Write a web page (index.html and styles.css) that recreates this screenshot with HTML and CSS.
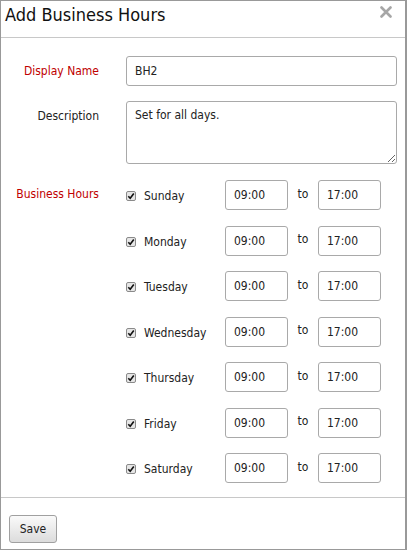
FILE: index.html
```html
<!DOCTYPE html>
<html>
<head>
    <title>Add Business Hours</title>
    <link rel="stylesheet" href="styles.css">
</head>
<body>

<div class="dialog">
    <div class="dialog-head">
        <h2>Add Business Hours</h2>
        <span class="close"><svg width="12" height="12" viewBox="0 0 12 12"><path d="M1.5 1.5 L10.5 10.5 M10.5 1.5 L1.5 10.5" stroke="#a6a6a6" stroke-width="2.6" stroke-linecap="round"/></svg></span>
    </div>

    <form class="form">
        <label class="lbl req" for="display_name">Display Name</label>
        <input type="text" id="display_name" value="BH2">

        <label class="lbl" for="description">Description</label>
        <textarea id="description">Set for all days.</textarea>

        <label class="lbl req">Business Hours</label>
        <div class="days">
            <div class="day">
                <span class="chk"><svg width="10" height="10" viewBox="0 0 10 10"><rect x="0.5" y="0.5" width="9" height="9" rx="1.5" fill="#e6e6e6" stroke="#8a8a8a"/><path d="M2.3 5.2 L4.2 7.2 L7.8 2.4" fill="none" stroke="#111" stroke-width="1.6"/></svg></span>
                <span class="day-name">Sunday</span>
                <input type="text" class="time" value="09:00">
                <span class="to">to</span>
                <input type="text" class="time" value="17:00">
            </div>
            <div class="day">
                <span class="chk"><svg width="10" height="10" viewBox="0 0 10 10"><rect x="0.5" y="0.5" width="9" height="9" rx="1.5" fill="#e6e6e6" stroke="#8a8a8a"/><path d="M2.3 5.2 L4.2 7.2 L7.8 2.4" fill="none" stroke="#111" stroke-width="1.6"/></svg></span>
                <span class="day-name">Monday</span>
                <input type="text" class="time" value="09:00">
                <span class="to">to</span>
                <input type="text" class="time" value="17:00">
            </div>
            <div class="day">
                <span class="chk"><svg width="10" height="10" viewBox="0 0 10 10"><rect x="0.5" y="0.5" width="9" height="9" rx="1.5" fill="#e6e6e6" stroke="#8a8a8a"/><path d="M2.3 5.2 L4.2 7.2 L7.8 2.4" fill="none" stroke="#111" stroke-width="1.6"/></svg></span>
                <span class="day-name">Tuesday</span>
                <input type="text" class="time" value="09:00">
                <span class="to">to</span>
                <input type="text" class="time" value="17:00">
            </div>
            <div class="day">
                <span class="chk"><svg width="10" height="10" viewBox="0 0 10 10"><rect x="0.5" y="0.5" width="9" height="9" rx="1.5" fill="#e6e6e6" stroke="#8a8a8a"/><path d="M2.3 5.2 L4.2 7.2 L7.8 2.4" fill="none" stroke="#111" stroke-width="1.6"/></svg></span>
                <span class="day-name">Wednesday</span>
                <input type="text" class="time" value="09:00">
                <span class="to">to</span>
                <input type="text" class="time" value="17:00">
            </div>
            <div class="day">
                <span class="chk"><svg width="10" height="10" viewBox="0 0 10 10"><rect x="0.5" y="0.5" width="9" height="9" rx="1.5" fill="#e6e6e6" stroke="#8a8a8a"/><path d="M2.3 5.2 L4.2 7.2 L7.8 2.4" fill="none" stroke="#111" stroke-width="1.6"/></svg></span>
                <span class="day-name">Thursday</span>
                <input type="text" class="time" value="09:00">
                <span class="to">to</span>
                <input type="text" class="time" value="17:00">
            </div>
            <div class="day">
                <span class="chk"><svg width="10" height="10" viewBox="0 0 10 10"><rect x="0.5" y="0.5" width="9" height="9" rx="1.5" fill="#e6e6e6" stroke="#8a8a8a"/><path d="M2.3 5.2 L4.2 7.2 L7.8 2.4" fill="none" stroke="#111" stroke-width="1.6"/></svg></span>
                <span class="day-name">Friday</span>
                <input type="text" class="time" value="09:00">
                <span class="to">to</span>
                <input type="text" class="time" value="17:00">
            </div>
            <div class="day">
                <span class="chk"><svg width="10" height="10" viewBox="0 0 10 10"><rect x="0.5" y="0.5" width="9" height="9" rx="1.5" fill="#e6e6e6" stroke="#8a8a8a"/><path d="M2.3 5.2 L4.2 7.2 L7.8 2.4" fill="none" stroke="#111" stroke-width="1.6"/></svg></span>
                <span class="day-name">Saturday</span>
                <input type="text" class="time" value="09:00">
                <span class="to">to</span>
                <input type="text" class="time" value="17:00">
            </div>
        </div>
    </form>

    <div class="dialog-foot">
        <button type="button" class="btn">Save</button>
    </div>
</div>

</body>
</html>
```

FILE: styles.css
```css
body {
    margin: 0;
    font-family: "DejaVu Sans Condensed", "DejaVu Sans", sans-serif;
    font-stretch: condensed;
    font-size: 12px;
    color: #222;
    background-color: #fff;
}
.dialog {
    box-sizing: border-box;
    width: 407px;
    height: 550px;
    border: 1px solid #999;
    border-right-width: 2px;
    display: flex;
    flex-direction: column;
}
.dialog-head {
    height: 36px;
    flex: none;
    border-bottom: 1px solid #c8c8c8;
    display: flex;
    justify-content: space-between;
    align-items: flex-start;
}
.dialog-head h2 {
    margin: 0;
    padding: 2px 0 0 4px;
    font-size: 18px;
    font-weight: normal;
    line-height: 24px;
    color: #111;
}
.close {
    display: flex;
    padding: 5px 13px 0 0;
}
.form {
    flex: 1;
    display: grid;
    grid-template-columns: 98px 271px;
    column-gap: 27px;
    row-gap: 15px;
    align-content: start;
    padding-top: 18px;
}
.lbl {
    text-align: right;
    line-height: 30px;
}
.req {
    color: #c00000;
}
.form input[type="text"],
.form textarea {
    box-sizing: border-box;
    height: 30px;
    border: 1px solid #a9a9a9;
    border-radius: 3px;
    padding: 0 8px;
    font-family: inherit;
    font-stretch: condensed;
    font-size: 12px;
    color: #222;
    margin: 0;
}
.form textarea {
    height: 63px;
    padding: 6px 8px;
    resize: vertical;
}
.days {
    display: flex;
    flex-direction: column;
    gap: 15.5px;
    padding-top: 1px;
}
.day {
    display: flex;
    align-items: center;
    height: 30px;
}
.chk {
    width: 10px;
    height: 10px;
    margin: 2px 8px 0 0;
    display: flex;
}
.day-name {
    width: 81px;
    padding-top: 2px;
}
.form input.time {
    width: 63px;
}
.to {
    width: 30px;
    text-align: center;
    margin-top: -3px;
}
.dialog-foot {
    box-sizing: border-box;
    flex: none;
    height: 52px;
    border-top: 1px solid #c8c8c8;
    padding: 17px 0 0 8px;
}
.btn {
    width: 48px;
    height: 28px;
    border: 1px solid #a0a0a0;
    border-radius: 3px;
    background: linear-gradient(#fafafa, #dcdcdc);
    font-family: inherit;
    font-stretch: condensed;
    font-size: 12px;
    color: #222;
    padding: 0;
}
```
